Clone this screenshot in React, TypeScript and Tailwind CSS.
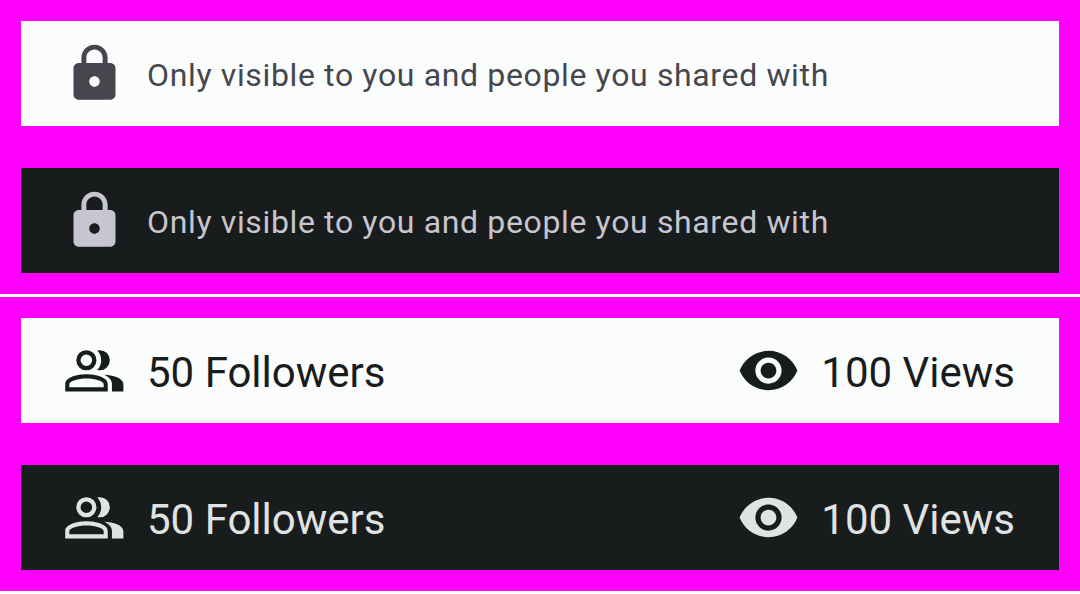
const lock = "M18 8h-1V6c0-2.76-2.24-5-5-5S7 3.24 7 6v2H6c-1.1 0-2 .9-2 2v10c0 1.1.9 2 2 2h12c1.100 0 2-.9 2-2V10c0-1.100-.9-2-2-2zm-6 9c-1.100 0-2-.9-2-2s.9-2 2-2 2 .9 2 2-.9 2-2 2zm3.100-9H8.900V6c0-1.710 1.390-3.100 3.100-3.100s3.100 1.390 3.100 3.100v2z";
const eye = "M12 4.500C7 4.500 2.730 7.610 1 12c1.730 4.390 6 7.500 11 7.500s9.270-3.110 11-7.500c-1.730-4.390-6-7.500-11-7.500zM12 17c-2.760 0-5-2.240-5-5s2.240-5 5-5 5 2.240 5 5-2.240 5-5 5zm0-8c-1.660 0-3 1.340-3 3s1.340 3 3 3 3-1.340 3-3-1.340-3-3-3z";
const people =
  "M8.9 4.25a3.85 3.85 0 1 0 0 7.700 3.850 3.850 0 0 0 0-7.700zm0 1.650a2.200 2.200 0 1 1 0 4.400 2.200 2.200 0 0 1 0-4.400z" +
  "M13.050 4.370c.3-.08.62-.12.95-.12a3.850 3.850 0 1 1 0 7.700c-.33 0-.65-.04-.95-.12.92-.9 1.500-2.230 1.500-3.730s-.58-2.830-1.500-3.730z" +
  "M8.950 13.400C5.500 13.400.85 14.500.85 17.100V20H17.050v-2.900c0-2.600-4.650-3.700-8.100-3.700zM2.400 18.400V17.200c0-1.200 3.300-2.150 6.550-2.150s6.550.95 6.550 2.150v1.200z" +
  "M15.600 13.600c3.400.2 7.400 1.200 7.400 3.600V20h-4.350v-2.900c0-1.500-1.200-2.700-3.050-3.500z";

function Icon({ d }: { d: string }) {
  return (
    <svg viewBox="0 0 24 24" className="size-[63px] shrink-0 fill-current" fillRule="evenodd">
      <path d={d} />
    </svg>
  );
}

function PrivacyRow({ className }: { className: string }) {
  return (
    <div className={`flex h-[105px] items-center gap-[21px] pl-[42px] ${className}`}>
      <Icon d={lock} />
      <span className="pt-0.5 text-[32px] leading-[42px] tracking-[0.64px] whitespace-nowrap">
        Only visible to you and people you shared with
      </span>
    </div>
  );
}

function Stat({ icon, label }: { icon: string; label: string }) {
  return (
    <div className="flex items-center gap-[21px]">
      <Icon d={icon} />
      <span className="pt-1 text-[42px] leading-[63px] whitespace-nowrap">{label}</span>
    </div>
  );
}

function StatsRow({ className }: { className: string }) {
  return (
    <div className={`flex h-[105px] items-center justify-between pr-[44px] pl-[42px] ${className}`}>
      <Stat icon={people} label="50 Followers" />
      <Stat icon={eye} label="100 Views" />
    </div>
  );
}

export default function App() {
  return (
    <main className="h-[594px] w-[1080px] overflow-hidden bg-white font-['Roboto',sans-serif]">
      <section className="mb-[3px] flex h-[294px] flex-col gap-[42px] bg-[#ff00ff] p-[21px]">
        <PrivacyRow className="bg-[#fbfdfc] text-[#46464f]" />
        <PrivacyRow className="bg-[#191c1c] text-[#c7c5d0]" />
      </section>
      <section className="flex h-[294px] flex-col gap-[42px] bg-[#ff00ff] p-[21px]">
        <StatsRow className="bg-[#fbfdfc] text-[#191c1c]" />
        <StatsRow className="bg-[#191c1c] text-[#e0e3e3]" />
      </section>
    </main>
  );
}
